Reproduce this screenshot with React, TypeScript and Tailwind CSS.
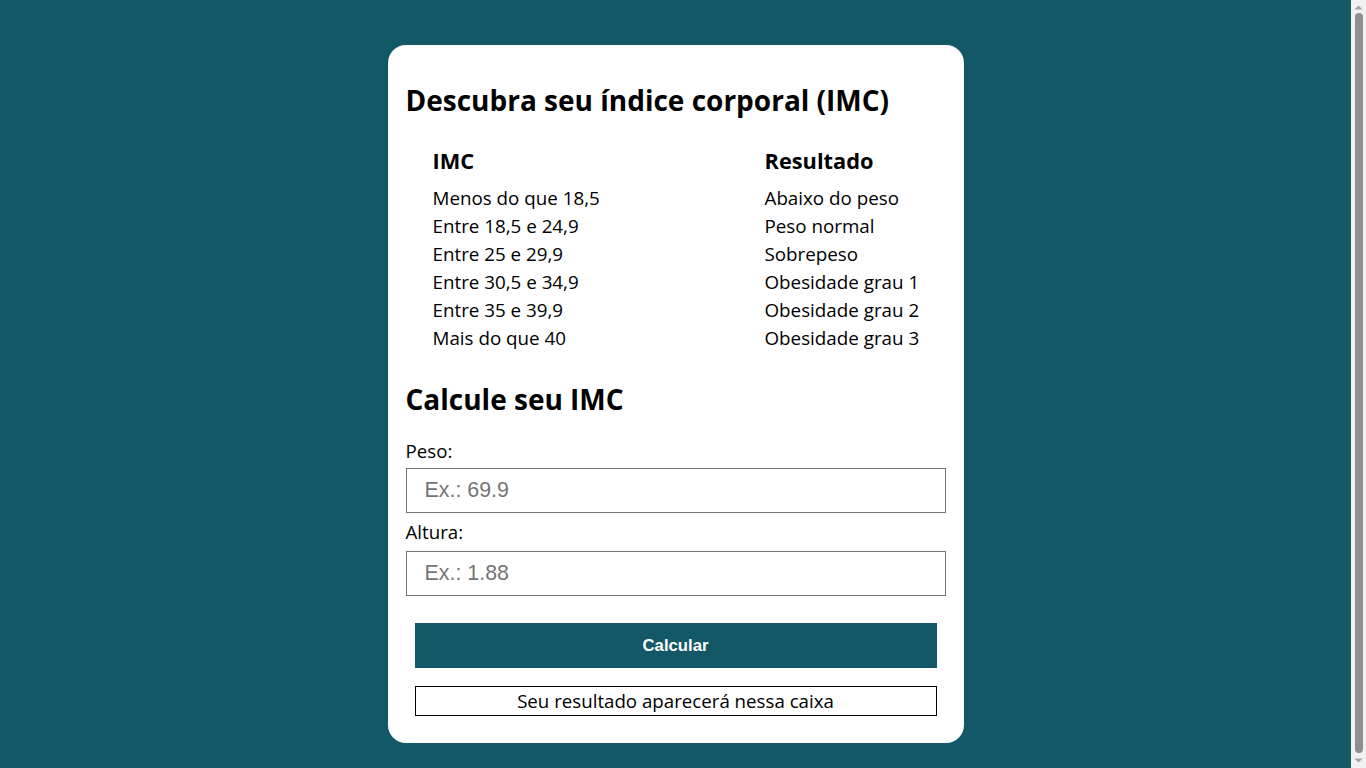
const faixas = [
  ['Menos do que 18,5', 'Abaixo do peso'],
  ['Entre 18,5 e 24,9', 'Peso normal'],
  ['Entre 25 e 29,9', 'Sobrepeso'],
  ['Entre 30,5 e 34,9', 'Obesidade grau 1'],
  ['Entre 35 e 39,9', 'Obesidade grau 2'],
  ['Mais do que 40', 'Obesidade grau 3'],
]

function Scrollbar() {
  return (
    <div className="flex w-[15px] shrink-0 flex-col items-center bg-[#f1f1f1]">
      <svg width="15" height="15" viewBox="0 0 15 15" className="shrink-0">
        <path d="M3.5 9.5 L7.5 5.5 L11.5 9.5 Z" fill="#a3a3a3" />
      </svg>
      <div className="mt-[-2px] w-[8px] flex-1 rounded-full bg-[#8f8f8f]" />
      <svg width="15" height="15" viewBox="0 0 15 15" className="shrink-0">
        <path d="M3.5 5.5 L7.5 9.5 L11.5 5.5 Z" fill="#a3a3a3" />
      </svg>
    </div>
  )
}

export default function App() {
  return (
    <div className="flex h-screen bg-[#125866] font-['Open_Sans',sans-serif] text-black">
      <div className="flex-1 overflow-hidden py-[45px]">
        <div className="mx-auto w-[576px] rounded-[18px] bg-white px-[18px] pt-[18px] pb-[27px]">
          <h1 className="mt-[21px] text-[28px] leading-[32px] font-bold">Descubra seu índice corporal (IMC)</h1>

          <div className="mt-[31px] grid grid-cols-[332px_1fr] pl-[27px]">
            <div className="text-[21.8px] leading-[28px] font-bold">IMC</div>
            <div className="text-[21.8px] leading-[28px] font-bold">Resultado</div>
            <div className="col-span-2 h-[9px]" />
            {faixas.map(([imc, res]) => (
              <div key={imc} className="contents">
                <div className="text-[18.8px] leading-[28px]">{imc}</div>
                <div className="text-[18.8px] leading-[28px]">{res}</div>
              </div>
            ))}
          </div>

          <h2 className="mt-[31px] text-[28px] leading-[32px] font-bold">Calcule seu IMC</h2>

          <label className="mt-[24px] block text-[18.7px] leading-[24px]">Peso:</label>
          <input
            type="text"
            placeholder="Ex.: 69.9"
            className="mt-[5px] block h-[45px] w-full border border-[#767676] px-[18px] font-['Liberation_Sans',sans-serif] text-[21.4px] placeholder:text-[#757575]"
          />
          <label className="mt-[7px] block text-[18.7px] leading-[24px]">Altura:</label>
          <input
            type="text"
            placeholder="Ex.: 1.88"
            className="mt-[7px] block h-[45px] w-full border border-[#767676] px-[18px] font-['Liberation_Sans',sans-serif] text-[21.4px] placeholder:text-[#757575]"
          />

          <div className="mx-[9px]">
            <button className="mt-[27px] block h-[45px] w-full bg-[#125866] font-['Liberation_Sans',sans-serif] text-[16.7px] font-bold text-white">
              Calcular
            </button>
            <div className="mt-[18px] flex h-[30px] items-center justify-center border border-black text-[18.7px]">
              Seu resultado aparecerá nessa caixa
            </div>
          </div>
        </div>
      </div>
      <Scrollbar />
    </div>
  )
}
